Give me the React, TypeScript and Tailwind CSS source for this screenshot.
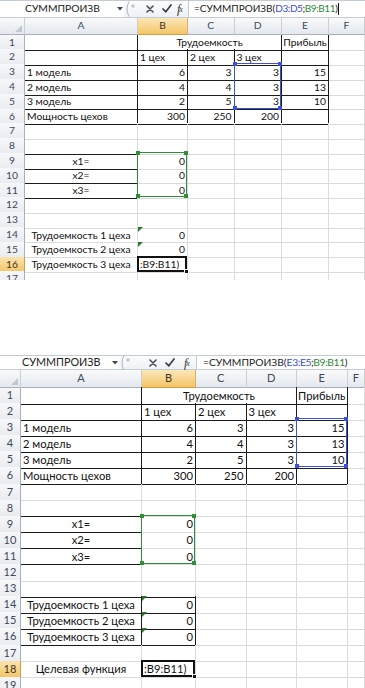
import React from 'react';

type Ov = 'blue' | 'green' | 'active';
type C = { t?: string; a?: 'l' | 'c' | 'r'; r?: boolean; b?: boolean; span?: boolean; tri?: boolean; ov?: Ov };

const E: C = {};
const RB = (t?: string, a: 'l' | 'c' | 'r' = 'r'): C => ({ t, a, r: true, b: true });

function buildRows(v: 1 | 2): C[][] {
  const rows: C[][] = [
    [RB(), { t: 'Трудоемкость', a: 'c', r: true, b: true, span: true }, RB('Прибыль', 'c'), E],
    [RB(), RB('1 цех', 'l'), RB('2 цех', 'l'), RB('3 цех', 'l'), RB(), E],
    [RB('1 модель', 'l'), RB('6'), RB('3'), RB('3'), RB('15'), E],
    [RB('2 модель', 'l'), RB('4'), RB('4'), RB('3'), RB('13'), E],
    [RB('3 модель', 'l'), RB('2'), RB('5'), RB('3'), RB('10'), E],
    [RB('Мощность цехов', 'l'), RB('300'), RB('250'), RB('200'), RB(), E],
    [E, E, E, E, E, E],
    [{ b: true }, E, E, E, E, E],
    [{ t: 'x1=', a: 'c', b: true }, { t: '0', a: 'r', ov: 'green' }, E, E, E, E],
    [{ t: 'x2=', a: 'c', b: true }, { t: '0', a: 'r' }, E, E, E, E],
    [{ t: 'x3=', a: 'c', b: true }, { t: '0', a: 'r' }, E, E, E, E],
    [E, E, E, E, E, E],
  ];
  rows[2][v === 1 ? 3 : 4].ov = 'blue';
  if (v === 1) {
    rows.push(
      [E, E, E, E, E, E],
      [{ t: 'Трудоемкость 1 цеха', a: 'c' }, { t: '0', a: 'r', tri: true }, E, E, E, E],
      [{ t: 'Трудоемкость 2 цеха', a: 'c' }, { t: '0', a: 'r', tri: true }, E, E, E, E],
      [{ t: 'Трудоемкость 3 цеха', a: 'c' }, { t: ':B9:B11)', a: 'l', ov: 'active' }, E, E, E, E],
      [E, E, E, E, E, E],
    );
  } else {
    rows.push(
      [{ b: true }, { b: true }, E, E, E, E],
      [{ t: 'Трудоемкость 1 цеха', a: 'c', r: true, b: true }, { t: '0', a: 'r', r: true, b: true, tri: true }, E, E, E, E],
      [{ t: 'Трудоемкость 2 цеха', a: 'c', r: true, b: true }, { t: '0', a: 'r', r: true, b: true, tri: true }, E, E, E, E],
      [{ t: 'Трудоемкость 3 цеха', a: 'c', r: true, b: true }, { t: '0', a: 'r', r: true, b: true, tri: true }, E, E, E, E],
      [E, E, E, E, E, E],
      [{ t: 'Целевая функция', a: 'c' }, { t: ':B9:B11)', a: 'l', ov: 'active' }, E, E, E, E],
      [E, E, E, E, E, E],
    );
  }
  return rows;
}

function Corners({ color }: { color: string }) {
  const sq = `absolute w-[4px] h-[4px] ${color}`;
  return (
    <>
      <div className={`${sq} -left-[2px] -top-[2px]`} />
      <div className={`${sq} -right-[2px] -top-[2px]`} />
      <div className={`${sq} -left-[2px] -bottom-[2px]`} />
      <div className={`${sq} -right-[2px] -bottom-[2px]`} />
    </>
  );
}

function Overlay({ kind, rowH }: { kind: Ov; rowH: number }) {
  if (kind === 'active') {
    return (
      <div className="absolute -left-[1px] -top-[1px] right-0 bottom-0 z-10 border-2 border-[#111]">
        <div className="absolute -right-[4px] -bottom-[4px] w-[5px] h-[5px] bg-[#111] border border-white" />
      </div>
    );
  }
  const style = { height: `${3 * rowH + 1}px` };
  if (kind === 'blue') {
    return (
      <div className="absolute -left-[1px] -top-[1px] right-0 z-10 border border-[#3e4fdc]" style={style}>
        <Corners color="bg-[#3e4fdc]" />
      </div>
    );
  }
  return (
    <div className="absolute -left-[1px] -top-[1px] right-0 z-10 border border-[#2f8f35]" style={style}>
      <Corners color="bg-[#2f8f35]" />
    </div>
  );
}

function Cell({ c, rowH }: { c: C; rowH: number }) {
  const cls = [
    'relative flex items-center whitespace-nowrap px-[2px] border-r border-b text-[#111]',
    c.r ? 'border-r-[#1c1c1c]' : 'border-r-[#d9dbdd]',
    c.b ? 'border-b-[#1c1c1c]' : 'border-b-[#d9dbdd]',
    c.a === 'r' ? 'justify-end' : c.a === 'c' ? 'justify-center' : 'justify-start',
    c.span ? 'col-span-3' : '',
  ].join(' ');
  return (
    <div className={cls}>
      {c.t && <span className="leading-none">{c.t}</span>}
      {c.tri && (
        <div className="absolute left-0 top-0 z-10 w-0 h-0 border-t-[5px] border-t-[#2b7a2b] border-r-[5px] border-r-transparent" />
      )}
      {c.ov && <Overlay kind={c.ov} rowH={rowH} />}
    </div>
  );
}

type Cfg = {
  v: 1 | 2;
  h: string;
  font: string;
  grid: string;
  headH: string;
  rowHCls: string;
  rowH: number;
  hdrFont: string;
  activeRow: number;
  fbH: string;
  nameW: string;
  namePl: string;
  nameFont: string;
  ctrlW: string;
  xMl: string;
  chkMl: string;
  fxMl: string;
  textPl: string;
  fbFont: string;
};

function XIcon() {
  return (
    <svg width="8" height="8" viewBox="0 0 8 8">
      <path d="M1 1 L7 7 M7 1 L1 7" stroke="#4a4f57" strokeWidth="1.6" strokeLinecap="round" />
    </svg>
  );
}
function CheckIcon() {
  return (
    <svg width="10" height="9" viewBox="0 0 10 9">
      <path d="M1 5 L3.8 7.8 L9 1" stroke="#3a3f46" strokeWidth="1.7" fill="none" strokeLinecap="round" strokeLinejoin="round" />
    </svg>
  );
}

function FormulaBar({ cfg }: { cfg: Cfg }) {
  const blue = cfg.v === 1 ? 'D3:D5' : 'E3:E5';
  return (
    <div className={`${cfg.fbH} flex items-stretch border-t border-b border-[#c4cbd3] bg-white`}>
      <div className={`${cfg.nameW} ${cfg.namePl} ${cfg.nameFont} flex items-center text-[#222]`}>СУММПРОИЗВ</div>
      <div className="w-[8px] flex items-center justify-center">
        <svg width="6" height="4" viewBox="0 0 6 4">
          <path d="M0 0 L6 0 L3 3.5 Z" fill="#44494f" />
        </svg>
      </div>
      <div className={`${cfg.ctrlW} flex items-center bg-linear-to-b from-[#fbfcfd] to-[#eef1f5]`}>
        <svg width="14" height="16" viewBox="0 0 14 16" className="shrink-0">
          <path d="M5 0.5 Q1 8 5 15.5" stroke="#aab3bf" strokeWidth="1" fill="none" />
          <circle cx="9" cy="5" r="2" fill="#d4dae2" />
          <path d="M8 5 L10 5" stroke="#9aa3ae" strokeWidth="0.8" />
        </svg>
        <div className={`${cfg.xMl} flex items-center`}>
          <XIcon />
        </div>
        <div className={`${cfg.chkMl} flex items-center`}>
          <CheckIcon />
        </div>
        <div className={`${cfg.fxMl} flex items-end leading-none text-[#333] italic`} style={{ fontFamily: '"Liberation Serif", serif' }}>
          <span className="text-[12px]">f</span>
          <span className="text-[8px] -ml-[1px] mb-[1px]">x</span>
        </div>
      </div>
      <div className={`flex-1 flex items-center border-l border-[#c4cbd3] ${cfg.textPl} ${cfg.fbFont} text-[#222] whitespace-nowrap`}>
        =СУММПРОИЗВ(
        <span className="tracking-[-0.4px]">
          <span className="text-[#3b4bd3]">{blue}</span>;<span className="text-[#2e8a34]">B9:B11</span>)
        </span>
        {cfg.v === 1 && <span className="inline-block w-[1px] h-[12px] bg-[#111] ml-[1px]" />}
      </div>
    </div>
  );
}

const HEAD_BASE = 'flex items-center justify-center border-r border-b';
const HEAD_NORMAL = 'bg-linear-to-b from-[#f9fafb] to-[#e4e8ed] border-r-[#c9cfd7] border-b-[#a5b1bf] text-[#3d4a59]';
const HEAD_ACTIVE = 'bg-linear-to-b from-[#fbe7b9] to-[#f4c565] border-r-[#e0ad5a] border-b-[#d39c45] text-[#3b3326]';
const ROWH_NORMAL = 'bg-linear-to-b from-[#f6f7f9] to-[#e9ecf0] border-r-[#a5b1bf] border-b-[#c9cfd7] text-[#3d4a59]';
const ROWH_ACTIVE = 'bg-linear-to-b from-[#fbe3ad] to-[#f4c565] border-r-[#d39c45] border-b-[#e0ad5a] text-[#3b3326]';

function Sheet({ cfg }: { cfg: Cfg }) {
  const rows = buildRows(cfg.v);
  return (
    <div className={`${cfg.h} overflow-hidden ${cfg.font}`} style={{ fontFamily: 'Lato, "Open Sans", sans-serif' }}>
      <FormulaBar cfg={cfg} />
      <div className={`${cfg.grid} ${cfg.headH} ${cfg.hdrFont}`}>
        <div className={`${HEAD_BASE} ${HEAD_NORMAL} relative`}>
          <div className="absolute right-[2px] bottom-[2px] w-0 h-0 border-b-[7px] border-b-[#c2c8d0] border-l-[7px] border-l-transparent" />
        </div>
        {['A', 'B', 'C', 'D', 'E', 'F'].map((l) => (
          <div key={l} className={`${HEAD_BASE} ${l === 'B' ? HEAD_ACTIVE : HEAD_NORMAL}`}>
            {l}
          </div>
        ))}
      </div>
      {rows.map((row, i) => (
        <div key={i} className={`${cfg.grid} ${cfg.rowHCls}`}>
          <div className={`${HEAD_BASE} ${cfg.hdrFont} ${i + 1 === cfg.activeRow ? ROWH_ACTIVE : ROWH_NORMAL}`}>{i + 1}</div>
          {row.map((c, j) => (
            <Cell key={j} c={c} rowH={cfg.rowH} />
          ))}
        </div>
      ))}
    </div>
  );
}

const S1: Cfg = {
  v: 1,
  h: 'h-[280px]',
  font: 'text-[10.3px]',
  grid: 'grid grid-cols-[25px_113px_50px_46.5px_47.5px_47px_1fr]',
  headH: 'h-[17.2px]',
  rowHCls: 'h-[14.8px]',
  rowH: 14.8,
  hdrFont: 'text-[10.3px]',
  activeRow: 16,
  fbH: 'h-[17.5px]',
  nameW: 'w-[116px]',
  namePl: 'pl-[25px]',
  nameFont: 'text-[10.3px]',
  ctrlW: 'w-[64px]',
  xMl: 'ml-[8px]',
  chkMl: 'ml-[8px]',
  fxMl: 'ml-[5px]',
  textPl: 'pl-[5px]',
  fbFont: 'text-[10px]',
};

const S2: Cfg = {
  v: 2,
  h: 'h-[333px]',
  font: 'text-[11.2px]',
  grid: 'grid grid-cols-[21px_121px_54px_50.5px_50.5px_50.5px_1fr]',
  headH: 'h-[17px]',
  rowHCls: 'h-[16.1px]',
  rowH: 16.1,
  hdrFont: 'text-[11px]',
  activeRow: 18,
  fbH: 'h-[15px]',
  nameW: 'w-[111px]',
  namePl: 'pl-[22px]',
  nameFont: 'text-[10.8px]',
  ctrlW: 'w-[77px]',
  xMl: 'ml-[16px]',
  chkMl: 'ml-[8px]',
  fxMl: 'ml-[9px]',
  textPl: 'pl-[6px]',
  fbFont: 'text-[10.3px]',
};

export default function App() {
  return (
    <div className="w-[365px] h-[688px] bg-white overflow-hidden flex flex-col">
      <Sheet cfg={S1} />
      <div className="h-[75px] shrink-0 bg-white" />
      <Sheet cfg={S2} />
    </div>
  );
}
